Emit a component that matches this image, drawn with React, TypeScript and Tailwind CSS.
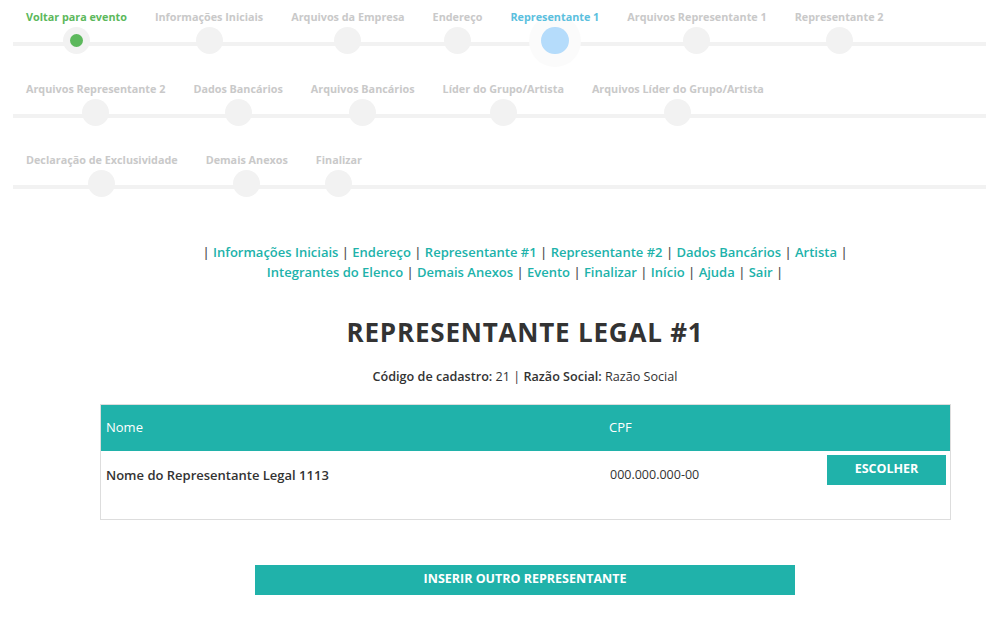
import React from 'react'

type Step = { label: string; state?: 'done' | 'active' }

const rows: Step[][] = [
  [
    { label: 'Voltar para evento', state: 'done' },
    { label: 'Informações Iniciais' },
    { label: 'Arquivos da Empresa' },
    { label: 'Endereço' },
    { label: 'Representante 1', state: 'active' },
    { label: 'Arquivos Representante 1' },
    { label: 'Representante 2' },
  ],
  [
    { label: 'Arquivos Representante 2' },
    { label: 'Dados Bancários' },
    { label: 'Arquivos Bancários' },
    { label: 'Líder do Grupo/Artista' },
    { label: 'Arquivos Líder do Grupo/Artista' },
  ],
  [
    { label: 'Declaração de Exclusividade' },
    { label: 'Demais Anexos' },
    { label: 'Finalizar' },
  ],
]

const links = [
  ['Informações Iniciais', 'Endereço', 'Representante #1', 'Representante #2', 'Dados Bancários', 'Artista'],
  ['Integrantes do Elenco', 'Demais Anexos', 'Evento', 'Finalizar', 'Início', 'Ajuda', 'Sair'],
]

function StepItem({ step }: { step: Step }) {
  const labelColor =
    step.state === 'done' ? 'text-[#5cb85c]' : step.state === 'active' ? 'text-[#5bc0de]' : 'text-[#c9c9c9]'
  return (
    <div className="flex flex-col items-center px-[14px]">
      <div className={`relative z-10 text-[10.8px] leading-[14px] font-bold whitespace-nowrap ${labelColor}`}>
        {step.label}
      </div>
      <div className="relative mt-[3px] h-[27px] w-[27px]">
        {step.state === 'active' && (
          <div className="absolute left-[-12px] top-[-12px] h-[52px] w-[52px] rounded-full bg-[#fbfbfb]" />
        )}
        {step.state === 'active' ? (
          <div className="relative h-[27px] w-[28px] rounded-full bg-[#b5dcfb]" />
        ) : (
          <div className="relative flex h-[27px] w-[27px] items-center justify-center rounded-full bg-[#f2f2f2]">
            {step.state === 'done' && <div className="h-[13px] w-[13px] rounded-full bg-[#5cb85c]" />}
          </div>
        )}
      </div>
    </div>
  )
}

export default function App() {
  return (
    <div className="min-h-screen bg-white text-[#333]" style={{ fontFamily: '"Open Sans", "Liberation Sans", sans-serif' }}>
      {/* Progress steps */}
      <div className="pl-[12px] pt-[10px]">
        {rows.map((row, i) => (
          <div key={i} className="relative h-[71.5px]">
            <div className="absolute left-[1px] right-0 top-[32px] h-[4px] bg-[#f2f2f2]" />
            <div className="relative flex">
              {row.map((s) => (
                <StepItem key={s.label} step={s} />
              ))}
            </div>
          </div>
        ))}
      </div>

      <div className="pl-[64px]">
        {/* Nav links */}
        <div className="mt-[17px] text-center text-[13px] leading-[20px] font-semibold text-[#555]">
          {links.map((line, i) => (
            <div key={i}>
              {i === 0 && <span>| </span>}
              {line.map((l) => (
                <span key={l}>
                  <a className="text-[#20b2aa] cursor-pointer">{l}</a>
                  <span> | </span>
                </span>
              ))}
            </div>
          ))}
        </div>

        <h1 className="mt-[33px] text-center text-[26px] leading-[34px] font-bold text-[#333] tracking-[0.8px]">
          REPRESENTANTE LEGAL #1
        </h1>

        <p className="mt-[19px] text-center text-[12.6px] leading-[18px]">
          <span className="font-semibold">Código de cadastro:</span> 21 | <span className="font-semibold">Razão Social:</span> Razão Social
        </p>
      </div>

      {/* Table */}
      <div className="mx-[100px] mt-[18px] w-[851px] border border-[#dddddd]">
        <div className="flex h-[46px] items-center bg-[#20b2aa] text-[13px] text-white">
          <div className="w-[508px] pl-[5px]">Nome</div>
          <div className="flex-1">CPF</div>
        </div>
        <div className="flex h-[68px] items-start pt-[4px] text-[12.5px]">
          <div className="w-[508px] pl-[5px] pt-[11px] text-[13px] font-semibold">Nome do Representante Legal 1113</div>
          <div className="w-[216px] pl-[1px] pt-[11px]">000.000.000-00</div>
          <div className="flex-1 pr-[4px] flex justify-end">
            <button className="h-[30px] w-[119px] bg-[#20b2aa] text-[12.5px] font-bold text-white">ESCOLHER</button>
          </div>
        </div>
      </div>

      <div className="mt-[45px] flex justify-center">
        <button className="ml-[64px] h-[30px] w-[540px] bg-[#20b2aa] text-[12.5px] font-bold text-white">
          INSERIR OUTRO REPRESENTANTE
        </button>
      </div>
    </div>
  )
}
